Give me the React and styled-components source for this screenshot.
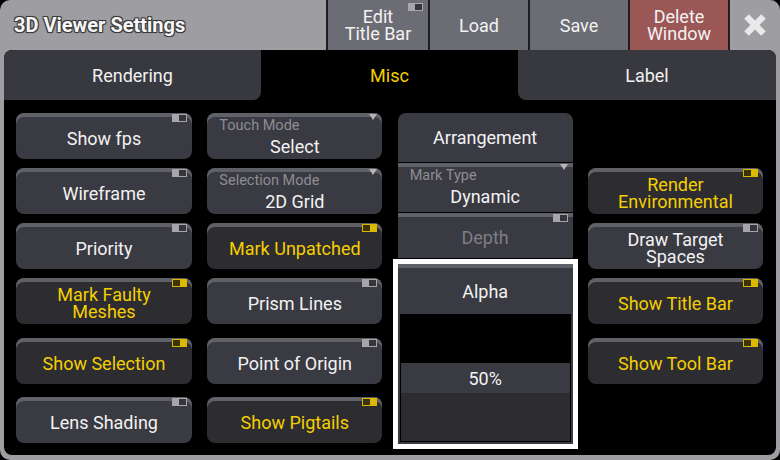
import styled, { createGlobalStyle } from 'styled-components'

const Global = createGlobalStyle`
  html, body {
    margin: 0;
    padding: 0;
    background: #000;
  }
  body {
    font-family: Roboto, 'Liberation Sans', sans-serif;
  }
`

const WHITE = '#f2f2f2'
const YELLOW = '#f5cf00'
const STRIP = '#606067'

const Window = styled.div`
  width: 780px;
  height: 460px;
  background: #9d9da2;
  border-radius: 10px;
  display: flex;
  flex-direction: column;
  overflow: hidden;
`

const TitleBar = styled.div`
  height: 50px;
  flex: none;
  display: flex;
`

const Title = styled.div`
  flex: 1;
  display: flex;
  align-items: center;
  padding-left: 14px;
  font-size: 20px;
  font-weight: 700;
  color: #f6f6f6;
  text-shadow: -1px -1px 0 #3a3a3a, 1px -1px 0 #3a3a3a, -1px 1px 0 #3a3a3a,
    1px 1px 0 #3a3a3a, 0 0 2px #222;
`

const TitleButtons = styled.div`
  display: flex;
  gap: 2px;
  padding-left: 2px;
  background: #1e1e22;
`

const TitleButton = styled.div`
  position: relative;
  width: ${p => p.$w || 98}px;
  background: ${p => (p.$danger ? '#9b5656' : '#6c6c74')};
  color: ${WHITE};
  font-size: 18px;
  line-height: 17px;
  display: flex;
  align-items: center;
  justify-content: center;
  text-align: center;
`

const CloseButton = styled.div`
  width: 50px;
  background: #9d9da2;
  display: flex;
  align-items: center;
  justify-content: center;
`

const Body = styled.div`
  flex: 1;
  display: flex;
  padding: 0 4px 5px;
`

const Panel = styled.div`
  flex: 1;
  background: #000;
  border-radius: 8px;
  overflow: hidden;
  display: flex;
  flex-direction: column;
`

const Tabs = styled.div`
  height: 50px;
  flex: none;
  display: grid;
  grid-template-columns: 257px 257px 258px;
`

const Tab = styled.div`
  background: ${p => (p.$active ? '#000' : '#38383f')};
  color: ${p => (p.$active ? YELLOW : WHITE)};
  border-radius: ${p => p.$radius || '0'};
  font-size: 18px;
  display: flex;
  align-items: center;
  justify-content: center;
`

const Grid = styled.div`
  display: grid;
  grid-template-columns: 176px 175px 175px 175px;
  grid-template-rows: 46px 46px 46px 46px 51px 50px;
  column-gap: 15.33px;
  row-gap: 9px;
  padding: 13px 0 0 12px;
`

const Cell = styled.div`
  grid-column: ${p => p.$col};
  grid-row: ${p => p.$row};
  align-self: end;
`

const Button = styled.div`
  position: relative;
  flex: none;
  box-sizing: border-box;
  height: ${p => p.$h || 46}px;
  padding-top: ${p => (p.$plain ? 0 : 4)}px;
  border-radius: ${p => p.$radius || '8px'};
  background: ${p => (p.$on ? '#2c2c31' : '#3a3a42')};
  box-shadow: ${p => (p.$plain ? 'none' : `inset 0 4px 0 ${STRIP}`)};
  color: ${p => (p.$dim ? '#7e7e83' : p.$on ? YELLOW : WHITE)};
  font-size: 18px;
  line-height: 17px;
  display: flex;
  align-items: center;
  justify-content: center;
  text-align: center;
`

const Indicator = styled.div`
  position: absolute;
  top: ${p => p.$top || 1}px;
  right: 5px;
  width: 15px;
  height: 8px;
  box-sizing: border-box;
  padding: 1px;
  display: flex;
  justify-content: ${p => (p.$on ? 'flex-start' : 'flex-end')};
  background: ${p => (p.$on ? '#dcb800' : '#a6a6aa')};

  &::after {
    content: '';
    width: 7px;
    height: 6px;
    background: ${p => (p.$on ? '#3b3300' : '#35353b')};
  }
`

const SelectBox = styled(Button)`
  flex-direction: column;
  align-items: stretch;
  justify-content: flex-start;
`

const SelectLabel = styled.div`
  margin-top: 1px;
  padding-left: 12px;
  text-align: left;
  font-size: 14.5px;
  line-height: 16px;
  color: #8d8d92;
`

const SelectValue = styled.div`
  margin-top: 3px;
  font-size: 18px;
  line-height: 20px;
  color: ${WHITE};
`

const Caret = styled.div`
  position: absolute;
  top: 1px;
  right: 5px;
  width: 0;
  height: 0;
  border-left: 4px solid transparent;
  border-right: 4px solid transparent;
  border-top: 6px solid #b4b4b8;
`

const Stack = styled.div`
  grid-column: 3;
  grid-row: 1 / span 6;
  align-self: start;
  display: flex;
  flex-direction: column;
  gap: 1px;
`

const Popup = styled.div`
  flex: none;
  margin: 0 -5px;
  border: 5px solid #fff;
  display: flex;
  flex-direction: column;
`

const PopupHead = styled.div`
  height: 50px;
  box-sizing: border-box;
  padding-top: 4px;
  background: #3a3a42;
  box-shadow: inset 0 4px 0 ${STRIP};
  color: ${WHITE};
  font-size: 18px;
  display: flex;
  align-items: center;
  justify-content: center;
`

const FaderWell = styled.div`
  height: 130px;
  box-sizing: border-box;
  padding: 0 2px 2px;
  background: #3a3a42;
  display: flex;
`

const Fader = styled.div`
  flex: 1;
  border: 1px solid #000;
  border-top: none;
  background: #000;
  display: flex;
  flex-direction: column;
  justify-content: flex-end;
`

const FaderValue = styled.div`
  height: 30px;
  flex: none;
  background: #3a3a42;
  color: ${WHITE};
  font-size: 18px;
  display: flex;
  align-items: center;
  justify-content: center;
`

const FaderFill = styled.div`
  height: 48px;
  flex: none;
  background: #2c2c31;
`

const toggles = [
  { col: 1, row: 1, text: 'Show fps' },
  { col: 1, row: 2, text: 'Wireframe' },
  { col: 1, row: 3, text: 'Priority' },
  { col: 1, row: 4, text: ['Mark Faulty', 'Meshes'], on: true },
  { col: 1, row: 5, text: 'Show Selection', on: true },
  { col: 1, row: 6, text: 'Lens Shading' },
  { col: 2, row: 3, text: 'Mark Unpatched', on: true },
  { col: 2, row: 4, text: 'Prism Lines' },
  { col: 2, row: 5, text: 'Point of Origin' },
  { col: 2, row: 6, text: 'Show Pigtails', on: true },
  { col: 4, row: 2, text: ['Render', 'Environmental'], on: true },
  { col: 4, row: 3, text: ['Draw Target', 'Spaces'] },
  { col: 4, row: 4, text: 'Show Title Bar', on: true },
  { col: 4, row: 5, text: 'Show Tool Bar', on: true },
]

const selects = [
  { col: 2, row: 1, label: 'Touch Mode', value: 'Select' },
  { col: 2, row: 2, label: 'Selection Mode', value: '2D Grid' },
]

const Label = ({ text }) =>
  Array.isArray(text) ? (
    <span>
      {text[0]}
      <br />
      {text[1]}
    </span>
  ) : (
    <span>{text}</span>
  )

const CloseIcon = () => (
  <svg width="24" height="24" viewBox="0 0 24 24">
    <path
      d="M3.5 3.5 L20.5 20.5 M20.5 3.5 L3.5 20.5"
      stroke="#e9e9ea"
      strokeWidth="6.5"
      fill="none"
    />
  </svg>
)

const App = () => (
  <>
    <Global />
    <Window>
      <TitleBar>
        <Title>3D Viewer Settings</Title>
        <TitleButtons>
          <TitleButton $w={100}>
            Edit
            <br />
            Title Bar
            <Indicator $top={3} />
          </TitleButton>
          <TitleButton>Load</TitleButton>
          <TitleButton>Save</TitleButton>
          <TitleButton $danger>
            Delete
            <br />
            Window
          </TitleButton>
          <CloseButton>
            <CloseIcon />
          </CloseButton>
        </TitleButtons>
      </TitleBar>
      <Body>
        <Panel>
          <Tabs>
            <Tab $radius="8px 0 8px 0">Rendering</Tab>
            <Tab $active>Misc</Tab>
            <Tab $radius="0 8px 0 8px">Label</Tab>
          </Tabs>
          <Grid>
            {toggles.map(t => (
              <Cell key={`${t.col}-${t.row}`} $col={t.col} $row={t.row}>
                <Button $on={t.on}>
                  <Label text={t.text} />
                  <Indicator $on={t.on} />
                </Button>
              </Cell>
            ))}
            {selects.map(s => (
              <Cell key={`${s.col}-${s.row}`} $col={s.col} $row={s.row}>
                <SelectBox>
                  <SelectLabel>{s.label}</SelectLabel>
                  <SelectValue>{s.value}</SelectValue>
                  <Caret />
                </SelectBox>
              </Cell>
            ))}
            <Stack>
              <Button $plain $h={49} $radius="8px 8px 0 0">
                Arrangement
              </Button>
              <SelectBox $h={49} $radius="0">
                <SelectLabel>Mark Type</SelectLabel>
                <SelectValue>Dynamic</SelectValue>
                <Caret />
              </SelectBox>
              <Button $h={45} $radius="0" $dim>
                Depth
                <Indicator />
              </Button>
              <Popup>
                <PopupHead>Alpha</PopupHead>
                <FaderWell>
                  <Fader>
                    <FaderValue>50%</FaderValue>
                    <FaderFill />
                  </Fader>
                </FaderWell>
              </Popup>
            </Stack>
          </Grid>
        </Panel>
      </Body>
    </Window>
  </>
)

export default App
